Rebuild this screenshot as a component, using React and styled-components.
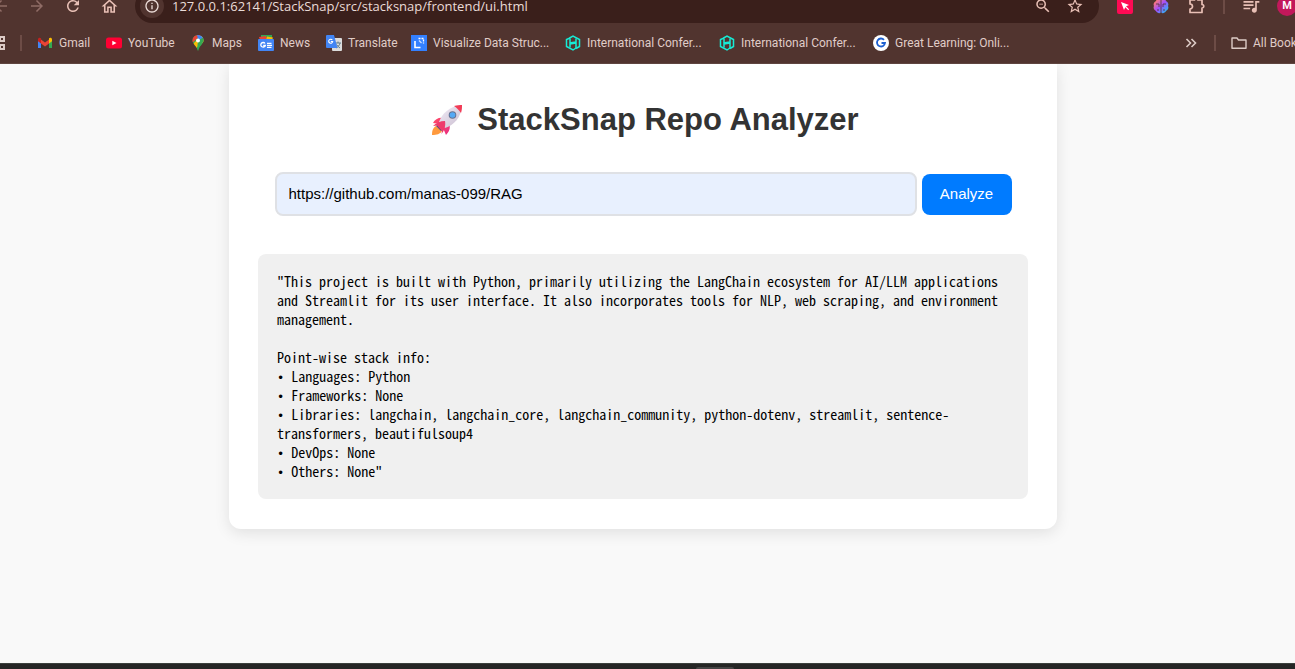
import React, { useState } from "react";
import styled, { createGlobalStyle } from "styled-components";
import {
  MdArrowBack,
  MdArrowForward,
  MdRefresh,
  MdOutlineHome,
  MdInfoOutline,
  MdZoomOut,
  MdStarBorder,
  MdQueueMusic,
} from "react-icons/md";

const GlobalStyle = createGlobalStyle`
  * { box-sizing: border-box; }
  body {
    margin: 0;
    background: #f9f9f9;
    font-family: "Liberation Sans", Arial, sans-serif;
    overflow: hidden;
  }
  button, input { font-family: inherit; }
`;

const Page = styled.div`
  display: flex;
  flex-direction: column;
  min-height: 100vh;
  overflow: hidden;
`;

const Chrome = styled.header`
  position: relative;
  z-index: 1;
  background: #51342f;
  color: #e0cdc8;
  font-family: Roboto, "Open Sans", sans-serif;
  border-bottom: 1px solid #5f4540;
`;

const Toolbar = styled.div`
  display: flex;
  align-items: center;
  height: 34px;
  margin: -11px -10px 0 -17px;
`;

const ToolButton = styled.button`
  display: flex;
  align-items: center;
  justify-content: center;
  width: ${(p) => p.$width || 36}px;
  height: 34px;
  padding: 0;
  border: 0;
  background: none;
  color: ${(p) => (p.$dim ? "#8f6c66" : "#e9c0b6")};
`;

const Omnibox = styled.div`
  display: flex;
  flex: 1;
  align-items: center;
  height: 34px;
  margin: 0 8px;
  padding: 0 8px 0 5px;
  border-radius: 17px;
  background: #3a1f1b;
`;

const SiteInfo = styled.button`
  display: flex;
  align-items: center;
  justify-content: center;
  width: 24px;
  height: 24px;
  padding: 0;
  border: 0;
  border-radius: 12px;
  background: #51342f;
  color: #ecdcd8;
`;

const Address = styled.input`
  flex: 1;
  min-width: 0;
  margin: 0 0 0 8px;
  padding: 0;
  border: 0;
  outline: 0;
  background: none;
  color: #eadcd8;
  font-family: "Open Sans", "Noto Sans", sans-serif;
  font-size: 13px;
`;

const Separator = styled.span`
  flex: none;
  width: 2px;
  height: 16px;
  margin: 0 ${(p) => p.$space || 8}px;
  background: #6d4c46;
`;

const Avatar = styled.span`
  width: 20px;
  height: 20px;
  border-radius: 10px;
  background: #c2185b;
  color: #fff;
  font-size: 11px;
  font-weight: 600;
  line-height: 20px;
  text-align: center;
`;

const Bookmarks = styled.nav`
  display: flex;
  align-items: center;
  height: 40px;
  margin-left: -9px;
`;

const BookmarkList = styled.div`
  display: flex;
  flex: 1;
  align-items: center;
`;

const Bookmark = styled.a`
  display: flex;
  align-items: center;
  gap: 6px;
  width: ${(p) => p.$width}px;
  color: inherit;
  font-size: 12px;
  line-height: 16px;
  text-decoration: none;
  white-space: nowrap;
  svg { flex: none; }
`;

const BookmarkEnd = styled.div`
  display: flex;
  align-items: center;
  width: 112px;
  overflow: hidden;
`;

const IconButton = styled.button`
  display: flex;
  flex: none;
  padding: 0;
  border: 0;
  background: none;
  color: #dccbc6;
`;

const Main = styled.main`
  flex: 1;
  padding: 0 9px 0 0;
`;

const Card = styled.section`
  max-width: 828px;
  margin: 0 auto;
  padding: 34px 29px 30px;
  border-radius: 0 0 12px 12px;
  background: #fff;
  box-shadow: 0 4px 15px rgba(0, 0, 0, 0.1);
`;

const Title = styled.h1`
  display: flex;
  align-items: center;
  justify-content: center;
  gap: 14px;
  margin: 0 0 30px;
  padding-left: 4px;
  color: #333;
  font-size: 31px;
  line-height: 44px;
`;

const RepoForm = styled.form`
  display: flex;
  align-items: center;
  justify-content: center;
  gap: 5px;
`;

const RepoInput = styled.input`
  flex: 0 1 642px;
  min-width: 0;
  height: 44px;
  padding: 0 12px 2px;
  border: 2px solid #dfe1e5;
  border-radius: 8px;
  outline: 0;
  background: #e8f0fe;
  color: #000;
  font-size: 15px;
`;

const AnalyzeButton = styled.button`
  width: 90px;
  height: 41px;
  padding: 0 0 2px;
  border: 0;
  border-radius: 8px;
  background: #007bff;
  color: #fff;
  font-size: 15px;
`;

const Result = styled.pre`
  margin: 38px 0 0;
  padding: 18px 19px;
  border-radius: 8px;
  background: #f0f0f0;
  color: #000;
  font-family: "Noto Sans Mono CJK SC", "DejaVu Sans Mono", monospace;
  font-size: 14px;
  line-height: 19px;
  white-space: pre-wrap;
`;

const Bullet = styled.span`
  font-family: "DejaVu Sans Mono", monospace;
  font-size: 12px;
  line-height: 12px;
`;

const Taskbar = styled.footer`
  display: flex;
  justify-content: center;
  align-items: flex-end;
  height: 6px;
  padding-left: 135px;
  background: #252625;
  border-top: 1px solid #3b413d;
`;

const TaskbarHandle = styled.span`
  width: 38px;
  height: 2px;
  border-radius: 2px 2px 0 0;
  background: #454545;
`;

const RocketIcon = () => (
  <svg width="32" height="32" viewBox="0 0 32 32" aria-hidden="true">
    <defs>
      <linearGradient id="hull" x1="0" y1="0" x2="1" y2="1">
        <stop offset="0" stopColor="#f3eef8" />
        <stop offset="1" stopColor="#c9bccf" />
      </linearGradient>
      <linearGradient id="fin" x1="0" y1="0" x2="1" y2="1">
        <stop offset="0" stopColor="#ff4a67" />
        <stop offset="1" stopColor="#e92f80" />
      </linearGradient>
    </defs>
    <path d="M5 22C2 24 1 26 1 31c5 0 8-1 10-4z" fill="#ff9a3d" />
    <path d="M13 14C8 13 4 15 2 19l7 1zM18 19c2 5 0 9-3 12l-3-7z" fill="url(#fin)" />
    <path d="M8 18C11 10 18 2 31 1 30 14 23 21 14 24z" fill="url(#hull)" />
    <path d="M23 2c3-1 6-1 8-1 0 2 0 5-1 8-2-3-4-5-7-7z" fill="#f23b56" />
    <path d="M7 20l5 6-2 1-5-5z" fill="#5a4a78" />
    <path d="M14 17c-5 0-9 2-12 5l4-.5 5 5.500-.5 3C13 27 15 22 14 17z" fill="#ee3a6c" />
    <circle cx="21.500" cy="11" r="3.800" fill="#66728f" />
    <circle cx="21.500" cy="11" r="2.800" fill="#55a9f5" />
  </svg>
);

const AppsIcon = () => (
  <svg width="14" height="14" viewBox="0 0 14 14" fill="none" stroke="#dccbc6" strokeWidth="2">
    <path d="M1 1h4v4H1zM9 1h4v4H9zM1 9h4v4H1zM9 9h4v4H9z" />
  </svg>
);

const GmailIcon = () => (
  <svg width="16" height="16" viewBox="0 0 16 16">
    <path d="M1 4.500V13h3V7z" fill="#4285f4" />
    <path d="M15 4.500V13h-3V7z" fill="#34a853" />
    <path d="M4 4.500L8 7.500l4-3V8.500l-4 3-4-3z" fill="#ea4335" />
    <path d="M1 4.500C1 2.800 2.800 2.300 4 3.300v5.200L1 6.200z" fill="#c5221f" />
    <path d="M15 4.500c0-1.700-1.800-2.200-3-1.200v5.200l3-2.300z" fill="#fbbc04" />
  </svg>
);

const YouTubeIcon = () => (
  <svg width="16" height="16" viewBox="0 0 16 16">
    <rect y="2.500" width="16" height="11" rx="2.500" fill="#ff0033" />
    <path d="M6.300 5.700v4.600L10.500 8z" fill="#fff" />
  </svg>
);

const MapsIcon = () => (
  <svg width="16" height="16" viewBox="0 0 16 16">
    <clipPath id="pin">
      <path d="M8 0a5.500 5.500 0 0 0-5.500 5.500c0 3.500 4 5 5 9.500.2 1 .8 1 1 0 1-4.500 5-6 5-9.500A5.500 5.500 0 0 0 8 0z" />
    </clipPath>
    <g clipPath="url(#pin)">
      <path d="M0 0h16v16H0z" fill="#34a853" />
      <path d="M0 12L12 0h4v5L5 14z" fill="#fbbc04" />
      <path d="M0 10L11 0H0z" fill="#ea4335" />
      <path d="M7 0h9v3l-6 4-2-3z" fill="#4285f4" />
      <path d="M8 5.500L14 2v4L7 15z" fill="#34a853" />
    </g>
    <circle cx="8" cy="5.500" r="2" fill="#fff" />
  </svg>
);

const NewsIcon = () => (
  <svg width="16" height="16" viewBox="0 0 16 16">
    <path d="M3 0h11v5H3z" fill="#34a853" />
    <path d="M1 2l7-1 1 4H2z" fill="#ea4335" />
    <path d="M9 1.500l6 1-1 3H8z" fill="#fbbc04" />
    <rect y="4" width="16" height="12" rx="1" fill="#4285f4" />
    <path d="M7 8.500a2.300 2.300 0 1 0 .3 2H5.200" fill="none" stroke="#fff" strokeWidth="1.300" />
    <path d="M9 8.300h4.500M9 10.300h5M9 12.300h4.500" stroke="#fff" strokeWidth="1.200" />
  </svg>
);

const TranslateIcon = () => (
  <svg width="16" height="16" viewBox="0 0 16 16">
    <rect x="6" y="3" width="10" height="13" rx="1" fill="#dcdcdc" />
    <path d="M9 8h6M12 6.500V8M14 8c-.5 2.500-2 4-4 5M10.500 9.500c1 1.500 2 2.500 3.500 3.500" fill="none" stroke="#607d8b" strokeWidth="1" />
    <path d="M1 0h7l3.500 13H1a1 1 0 0 1-1-1V1a1 1 0 0 1 1-1z" fill="#4285f4" />
    <path d="M6.300 5a2 2 0 1 0 .4 1.500H4.800" fill="none" stroke="#fff" strokeWidth="1.100" />
  </svg>
);

const VisualizeIcon = () => (
  <svg width="16" height="16" viewBox="0 0 16 16">
    <rect width="16" height="16" fill="#3380ff" />
    <path d="M4 6v6.500h5.500" fill="none" stroke="#fff" strokeWidth="1.600" />
    <path d="M7.500 3.500h5v5" fill="none" stroke="#fff" strokeWidth="1.300" strokeDasharray="2 1" />
    <path d="M8 5.500L10.500 8" fill="none" stroke="#cfe0ff" strokeWidth="1.200" />
  </svg>
);

const ConferenceIcon = () => (
  <svg width="16" height="16" viewBox="0 0 16 16" fill="none" stroke="#16ecd6" strokeWidth="1.500">
    <path d="M4.500 3L8 1l6.500 3.500v7L11 13.500M11 13L8 15l-6.500-3.500v-7L5 3" />
    <path d="M5 3.500V12.500M11 3.500V13M5 9.500V8l6-1M5 9l6-1" />
  </svg>
);

const GreatLearningIcon = () => (
  <svg width="16" height="16" viewBox="0 0 16 16">
    <circle cx="8" cy="8" r="8" fill="#fff" />
    <path d="M11 4.800A4 4 0 1 0 12 8H8.500" fill="none" stroke="#1d5fd0" strokeWidth="1.800" />
  </svg>
);

const CursorIcon = () => (
  <svg width="16" height="16" viewBox="0 0 16 16">
    <rect width="16" height="16" rx="2" fill="#ff0a54" />
    <path d="M4 4l8 3-3 1.300 3 3L11.300 12.300l-3-3L7 12z" fill="#fff" />
  </svg>
);

const BrainIcon = () => (
  <svg width="16" height="16" viewBox="0 0 16 16">
    <defs>
      <linearGradient id="brain" x1="0" y1="0" x2="1" y2="1">
        <stop offset="0.150" stopColor="#ff7a78" />
        <stop offset="0.500" stopColor="#a04dff" />
        <stop offset="0.900" stopColor="#2bb8f0" />
      </linearGradient>
    </defs>
    <path d="M8 1C5.500 0 3.500 1 3 3 1 4 0 6 1 8c-1 2 0 4 2 5 1 2 3.500 3 5 1.500C9.500 16 12 15 13 13c2-1 3-3 2-5 1-2 0-4-2-5-.5-2-2.500-3-5-2z" fill="url(#brain)" />
    <path d="M8 1v14M3 6h3v3M13 6h-3v3M4 12h2M12 12h-2" fill="none" stroke="#51342f" strokeWidth="0.800" />
  </svg>
);

const ExtensionsIcon = () => (
  <svg width="18" height="18" viewBox="0 0 18 18" fill="none" stroke="currentColor" strokeWidth="1.700" strokeLinejoin="round">
    <path d="M2 3h4.500a1.700 1.700 0 0 1 3.400 0H14v4.500a1.700 1.700 0 0 1 0 3.500v4.500H2V12a2.500 2.500 0 0 0 0-5z" />
  </svg>
);

const ChevronsIcon = () => (
  <svg width="16" height="16" viewBox="0 0 16 16" fill="none" stroke="currentColor" strokeWidth="1.600">
    <path d="M3.500 4l4 4-4 4M8.500 4l4 4-4 4" />
  </svg>
);

const FolderIcon = () => (
  <svg width="16" height="16" viewBox="0 0 16 16" fill="none" stroke="#dccbc6" strokeWidth="1.400">
    <path d="M1 3h5l1.500 2H15v8.300H1z" strokeLinejoin="round" />
  </svg>
);

const bookmarks = [
  { label: "Gmail", width: 69, Icon: GmailIcon },
  { label: "YouTube", width: 84, Icon: YouTubeIcon },
  { label: "Maps", width: 68, Icon: MapsIcon },
  { label: "News", width: 68, Icon: NewsIcon },
  { label: "Translate", width: 85, Icon: TranslateIcon },
  { label: "Visualize Data Struc...", width: 154, Icon: VisualizeIcon },
  { label: "International Confer...", width: 154, Icon: ConferenceIcon },
  { label: "International Confer...", width: 154, Icon: ConferenceIcon },
  { label: "Great Learning: Onli...", width: 154, Icon: GreatLearningIcon },
];

const summary =
  "This project is built with Python, primarily utilizing the LangChain ecosystem for AI/LLM applications and Streamlit for its user interface. It also incorporates tools for NLP, web scraping, and environment management.";

const stack = [
  "Languages: Python",
  "Frameworks: None",
  "Libraries: langchain, langchain_core, langchain_community, python-dotenv, streamlit, sentence-transformers, beautifulsoup4",
  "DevOps: None",
  "Others: None",
];

export default function App() {
  const [repo, setRepo] = useState("https://github.com/manas-099/RAG");

  return (
    <Page>
      <GlobalStyle />
      <Chrome>
        <Toolbar>
          <ToolButton $dim aria-label="Back"><MdArrowBack size={18} /></ToolButton>
          <ToolButton $dim aria-label="Forward"><MdArrowForward size={18} /></ToolButton>
          <ToolButton aria-label="Reload"><MdRefresh size={18} /></ToolButton>
          <ToolButton aria-label="Home"><MdOutlineHome size={19} /></ToolButton>
          <Omnibox>
            <SiteInfo aria-label="Site information"><MdInfoOutline size={16} /></SiteInfo>
            <Address
              aria-label="Address"
              defaultValue="127.0.0.1:62141/StackSnap/src/stacksnap/frontend/ui.html"
            />
            <ToolButton $width={32} aria-label="Zoom"><MdZoomOut size={18} /></ToolButton>
            <ToolButton $width={32} aria-label="Bookmark this page"><MdStarBorder size={18} /></ToolButton>
          </Omnibox>
          <ToolButton aria-label="Cursor extension"><CursorIcon /></ToolButton>
          <ToolButton aria-label="Brain extension"><BrainIcon /></ToolButton>
          <ToolButton aria-label="Extensions"><ExtensionsIcon /></ToolButton>
          <Separator />
          <ToolButton aria-label="Media"><MdQueueMusic size={20} /></ToolButton>
          <ToolButton aria-label="Profile"><Avatar>M</Avatar></ToolButton>
        </Toolbar>
        <Bookmarks aria-label="Bookmarks">
          <IconButton aria-label="Apps"><AppsIcon /></IconButton>
          <Separator $space={15} />
          <BookmarkList>
            {bookmarks.map(({ label, width, Icon }, i) => (
              <Bookmark key={i} href="#" $width={width}>
                <Icon />
                {label}
              </Bookmark>
            ))}
          </BookmarkList>
          <BookmarkEnd>
            <IconButton aria-label="More bookmarks"><ChevronsIcon /></IconButton>
            <Separator $space={15} />
            <Bookmark href="#">
              <FolderIcon />
              All Bookmarks
            </Bookmark>
          </BookmarkEnd>
        </Bookmarks>
      </Chrome>
      <Main>
        <Card>
          <Title>
            <RocketIcon />
            StackSnap Repo Analyzer
          </Title>
          <RepoForm onSubmit={(e) => e.preventDefault()}>
            <RepoInput
              aria-label="Repository URL"
              value={repo}
              onChange={(e) => setRepo(e.target.value)}
            />
            <AnalyzeButton type="submit">Analyze</AnalyzeButton>
          </RepoForm>
          <Result>
            {`"${summary}\n\nPoint-wise stack info:`}
            {stack.map((line) => (
              <React.Fragment key={line}>
                {"\n"}
                <Bullet>•</Bullet>
                {` ${line}`}
              </React.Fragment>
            ))}
            {'"'}
          </Result>
        </Card>
      </Main>
      <Taskbar>
        <TaskbarHandle />
      </Taskbar>
    </Page>
  );
}
